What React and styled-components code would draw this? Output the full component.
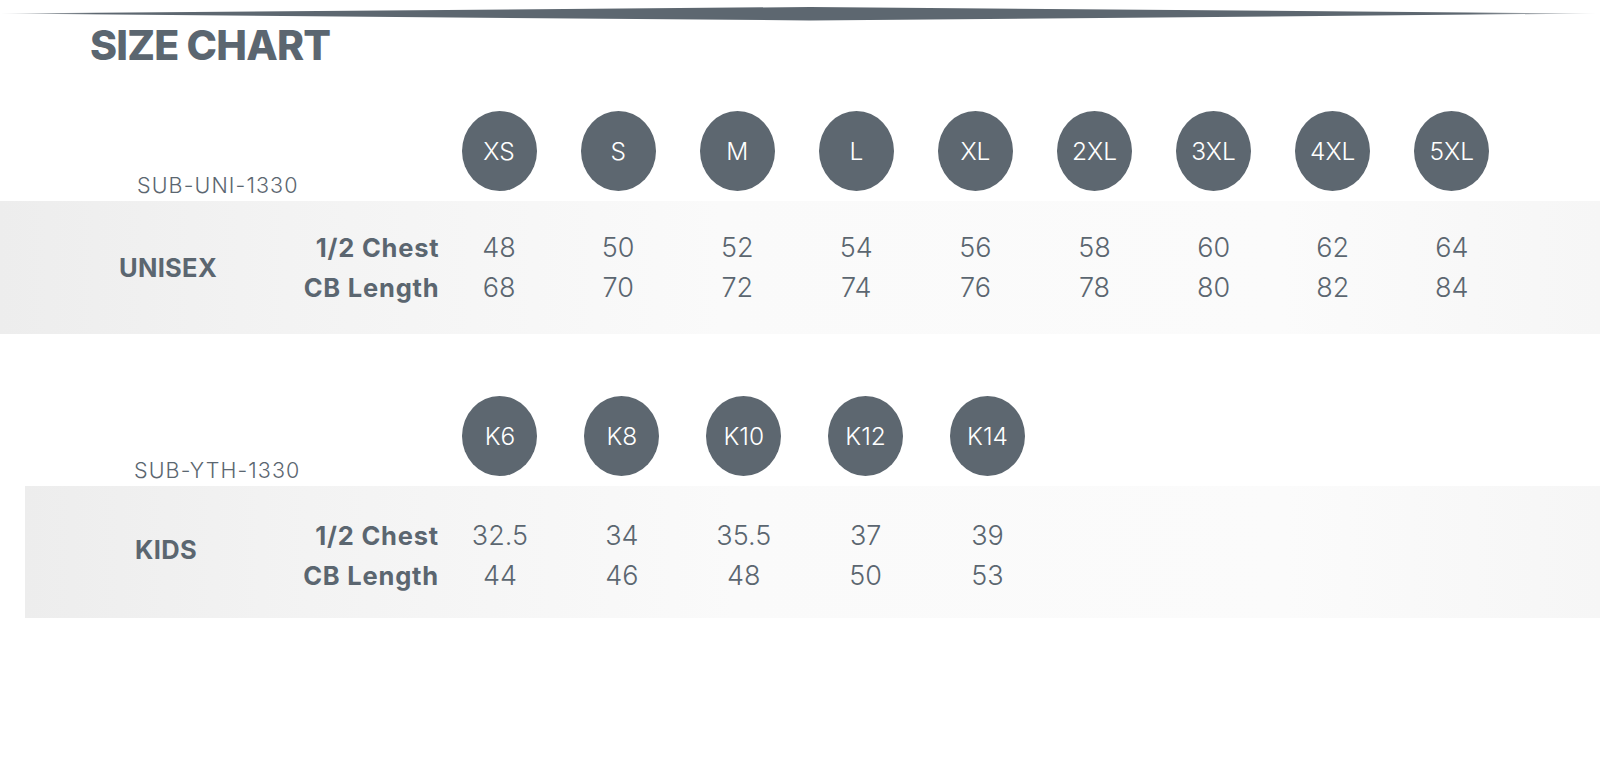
import styled, { createGlobalStyle } from "styled-components";

const GlobalStyle = createGlobalStyle`
    body{
        margin: 0;
        background: #FFFFFF;
        font-family: 'Inter', 'Liberation Sans', sans-serif;
        color: #5B6670;
    }
`;

const unisex = {
    code: "SUB-UNI-1330",
    name: "UNISEX",
    sizes: ["XS", "S", "M", "L", "XL", "2XL", "3XL", "4XL", "5XL"],
    chest: ["48", "50", "52", "54", "56", "58", "60", "62", "64"],
    length: ["68", "70", "72", "74", "76", "78", "80", "82", "84"],
};

const kids = {
    code: "SUB-YTH-1330",
    name: "KIDS",
    sizes: ["K6", "K8", "K10", "K12", "K14"],
    chest: ["32.5", "34", "35.5", "37", "39"],
    length: ["44", "46", "48", "50", "53"],
};

function TopBar() {
    return (
        <Bar viewBox="0 0 1600 22" preserveAspectRatio="none">
            <defs>
                <linearGradient id="barFade" x1="0" x2="1" y1="0" y2="0">
                    <stop offset="0" stopColor="#5D6770" stopOpacity="0.2" />
                    <stop offset="0.06" stopColor="#5D6770" />
                    <stop offset="0.92" stopColor="#5D6770" />
                    <stop offset="1" stopColor="#5D6770" stopOpacity="0.2" />
                </linearGradient>
            </defs>
            <polygon points="0,13.5 810,7 1596,13.5 810,20.5" fill="url(#barFade)" />
        </Bar>
    );
}

function SizeTable({ data, col, codeW, codePad, catW, labelW, offset, top, height, nudge, lift }) {
    return (
        <Section $top={top}>
            <HeaderRow>
                <Code $w={codeW} $pad={codePad}>{data.code}</Code>
                {data.sizes.map(s =>
                    <SizeCell key={s} $col={col}>
                        <Bubble>{s}</Bubble>
                    </SizeCell>)}
            </HeaderRow>
            <Band $offset={offset} $h={height} $nudge={nudge} $cat={catW} $label={labelW} $col={col} $n={data.sizes.length}>
                <Category $lift={lift}>{data.name}</Category>
                <Labels>
                    <span>1/2 Chest</span>
                    <span>CB Length</span>
                </Labels>
                {data.sizes.map((s, i) =>
                    <Values key={s}>
                        <span>{data.chest[i]}</span>
                        <span>{data.length[i]}</span>
                    </Values>)}
            </Band>
        </Section>
    );
}

export default function App() {
    return (
        <Page>
            <GlobalStyle />
            <TopBar />
            <Title>SIZE CHART</Title>
            <SizeTable data={unisex} col={119.1} codeW={439.5} codePad={137}
                catW={336} labelW={103.5} offset={0} top={45} height={133} nudge={0} lift={0} />
            <SizeTable data={kids} col={121.9} codeW={439} codePad={134}
                catW={283} labelW={131.5} offset={24.5} top={62} height={132} nudge={8} lift={14} />
        </Page>
    );
}

const Page = styled.div`
    width: 1600px;
    height: 782px;
    overflow: hidden;
    background: #FFFFFF;
`;

const Bar = styled.svg`
    display: block;
    width: 1600px;
    height: 22px;
`;

const Title = styled.h1`
    margin: 2px 0 0 90px;
    font-size: 41px;
    line-height: 42px;
    font-weight: 800;
    letter-spacing: -0.8px;
    color: #5B6670;
`;

const Section = styled.div`
    margin-top: ${p => p.$top}px;
`;

const HeaderRow = styled.div`
    display: flex;
    align-items: flex-end;
    height: 80px;
`;

const Code = styled.div`
    width: ${p => p.$w}px;
    box-sizing: border-box;
    padding-left: ${p => p.$pad}px;
    margin-bottom: -6px;
    font-size: 21.5px;
    font-weight: 300;
    letter-spacing: 1.1px;
    line-height: 24px;
    color: #5B6670;
`;

const SizeCell = styled.div`
    width: ${p => p.$col}px;
    display: flex;
    justify-content: center;
`;

const Bubble = styled.div`
    width: 75px;
    height: 80px;
    border-radius: 50%;
    background-color: #5D6770;
    color: #FFFFFF;
    display: flex;
    align-items: center;
    justify-content: center;
    font-size: 24.5px;
    font-weight: 300;
`;

const Band = styled.div`
    margin: 10px 0 0 ${p => p.$offset}px;
    width: ${p => 1600 - p.$offset}px;
    height: ${p => p.$h}px;
    box-sizing: border-box;
    padding-top: ${p => p.$nudge}px;
    display: grid;
    grid-template-columns: ${p => p.$cat}px ${p => p.$label}px repeat(${p => p.$n}, ${p => p.$col}px);
    align-items: center;
    background: linear-gradient(90deg, #EDEDED 0%, #F3F3F3 18%, #FAFAFA 45%, #FBFBFB 80%, #F6F6F6 100%);
`;

const Category = styled.div`
    margin-bottom: ${p => p.$lift}px;
    text-align: center;
    font-size: 25.5px;
    font-weight: 700;
    letter-spacing: 0.3px;
    color: #5B6670;
`;

const Labels = styled.div`
    display: flex;
    flex-direction: column;
    align-items: flex-end;
    span{
        font-size: 25.5px;
        font-weight: 700;
        letter-spacing: 0.8px;
        line-height: 40px;
        white-space: nowrap;
    }
`;

const Values = styled.div`
    display: flex;
    flex-direction: column;
    align-items: center;
    span{
        font-size: 27px;
        font-weight: 300;
        line-height: 40px;
    }
`;
